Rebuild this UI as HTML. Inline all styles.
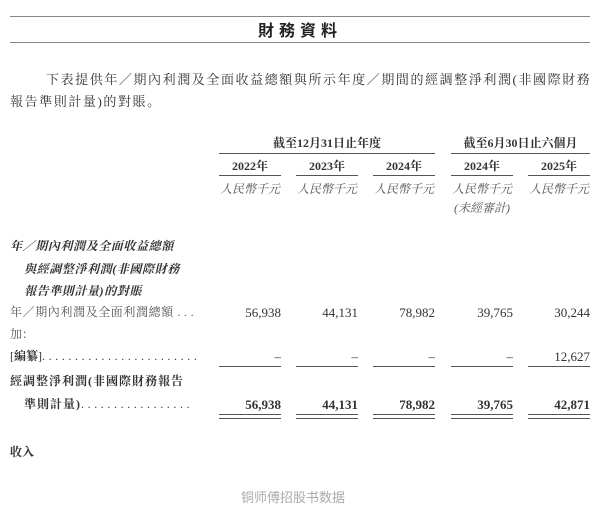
<!DOCTYPE html>
<html><head><meta charset="utf-8"><style>
body{margin:0;width:600px;height:510px;background:#fff;position:relative;overflow:hidden;font-family:"Liberation Serif","Noto Serif CJK SC",serif;color:#333;}
.a{position:absolute;white-space:nowrap;line-height:1;}
.hl{position:absolute;height:1px;background:#555;}
.r{text-align:right;}
.c{text-align:center;}
.n{font-size:13px;}
.b{font-weight:bold;}
.it{font-style:italic;color:#555;font-size:12px;}
.d{letter-spacing:3.6px;}
</style></head><body>
<div class="hl" style="left:10px;top:16px;width:580px;background:#888"></div>
<div class="a b" style="left:0;width:600px;top:21px;text-align:center;font-size:16px;letter-spacing:5px;font-family:'Noto Sans CJK SC',sans-serif;color:#222">財務資料</div>
<div class="hl" style="left:10px;top:42px;width:580px;background:#888"></div>
<div class="a" style="left:46px;top:73px;font-size:13px;letter-spacing:1.58px">下表提供年／期內利潤及全面收益總額與所示年度／期間的經調整淨利潤(非國際財務</div>
<div class="a" style="left:10px;top:95px;font-size:13px;letter-spacing:1.58px">報告準則計量)的對賬。</div>

<div class="a b c" style="left:219px;width:216px;top:137px;font-size:12px">截至12月31日止年度</div>
<div class="a b c" style="left:451px;width:139px;top:137px;font-size:12px">截至6月30日止六個月</div>
<div class="hl" style="left:219px;top:153px;width:216px"></div>
<div class="hl" style="left:451px;top:153px;width:139px"></div>

<div class="a b c" style="left:219px;width:62px;top:160px;font-size:12px">2022年</div>
<div class="a b c" style="left:296px;width:62px;top:160px;font-size:12px">2023年</div>
<div class="a b c" style="left:373px;width:62px;top:160px;font-size:12px">2024年</div>
<div class="a b c" style="left:451px;width:62px;top:160px;font-size:12px">2024年</div>
<div class="a b c" style="left:528px;width:62px;top:160px;font-size:12px">2025年</div>
<div class="hl" style="left:219px;top:175px;width:62px"></div>
<div class="hl" style="left:296px;top:175px;width:62px"></div>
<div class="hl" style="left:373px;top:175px;width:62px"></div>
<div class="hl" style="left:451px;top:175px;width:62px"></div>
<div class="hl" style="left:528px;top:175px;width:62px"></div>

<div class="a it c" style="left:219px;width:62px;top:183px">人民幣千元</div>
<div class="a it c" style="left:296px;width:62px;top:183px">人民幣千元</div>
<div class="a it c" style="left:373px;width:62px;top:183px">人民幣千元</div>
<div class="a it c" style="left:451px;width:62px;top:183px">人民幣千元</div>
<div class="a it c" style="left:528px;width:62px;top:183px">人民幣千元</div>
<div class="a it c" style="left:451px;width:62px;top:202px">(未經審計)</div>

<div class="a b" style="left:10px;top:240px;font-size:12px;font-style:italic;letter-spacing:0.6px">年／期內利潤及全面收益總額</div>
<div class="a b" style="left:24px;top:263px;font-size:12px;font-style:italic;letter-spacing:0.6px">與經調整淨利潤(非國際財務</div>
<div class="a b" style="left:24px;top:285px;font-size:12px;font-style:italic;letter-spacing:0.6px">報告準則計量)的對賬</div>

<div class="a" style="left:10px;top:306px;font-size:12px;color:#555;letter-spacing:0.6px">年／期內利潤及全面利潤總額 <span class="d">...</span></div>
<div class="a r n" style="left:219px;width:62px;top:306px">56,938</div>
<div class="a r n" style="left:296px;width:62px;top:306px">44,131</div>
<div class="a r n" style="left:373px;width:62px;top:306px">78,982</div>
<div class="a r n" style="left:451px;width:62px;top:306px">39,765</div>
<div class="a r n" style="left:528px;width:62px;top:306px">30,244</div>

<div class="a" style="left:10px;top:328px;font-size:12px;color:#555">加：</div>

<div class="a" style="left:10px;top:350px;font-size:12px">[<b>編纂</b>]<span class="d">........................</span></div>
<div class="a r n" style="left:219px;width:62px;top:350px">–</div>
<div class="a r n" style="left:296px;width:62px;top:350px">–</div>
<div class="a r n" style="left:373px;width:62px;top:350px">–</div>
<div class="a r n" style="left:451px;width:62px;top:350px">–</div>
<div class="a r n" style="left:528px;width:62px;top:350px">12,627</div>
<div class="hl" style="left:219px;top:366px;width:62px"></div>
<div class="hl" style="left:296px;top:366px;width:62px"></div>
<div class="hl" style="left:373px;top:366px;width:62px"></div>
<div class="hl" style="left:451px;top:366px;width:62px"></div>
<div class="hl" style="left:528px;top:366px;width:62px"></div>

<div class="a b" style="left:10px;top:375px;font-size:12px;letter-spacing:1px">經調整淨利潤(非國際財務報告</div>
<div class="a" style="left:24px;top:398px;font-size:12px"><b style="letter-spacing:1px">準則計量)</b><span class="d">.................</span></div>
<div class="a r n b" style="left:219px;width:62px;top:398px">56,938</div>
<div class="a r n b" style="left:296px;width:62px;top:398px">44,131</div>
<div class="a r n b" style="left:373px;width:62px;top:398px">78,982</div>
<div class="a r n b" style="left:451px;width:62px;top:398px">39,765</div>
<div class="a r n b" style="left:528px;width:62px;top:398px">42,871</div>
<div class="hl" style="left:219px;top:414px;width:62px"></div><div class="hl" style="left:219px;top:418px;width:62px"></div>
<div class="hl" style="left:296px;top:414px;width:62px"></div><div class="hl" style="left:296px;top:418px;width:62px"></div>
<div class="hl" style="left:373px;top:414px;width:62px"></div><div class="hl" style="left:373px;top:418px;width:62px"></div>
<div class="hl" style="left:451px;top:414px;width:62px"></div><div class="hl" style="left:451px;top:418px;width:62px"></div>
<div class="hl" style="left:528px;top:414px;width:62px"></div><div class="hl" style="left:528px;top:418px;width:62px"></div>

<div class="a b" style="left:10px;top:446px;font-size:12px">收入</div>
<div class="a" style="left:0;width:586px;text-align:center;top:490px;font-size:13px;color:#aaa;font-family:'Noto Sans CJK SC',sans-serif">铜师傅招股书数据</div>
</body></html>
